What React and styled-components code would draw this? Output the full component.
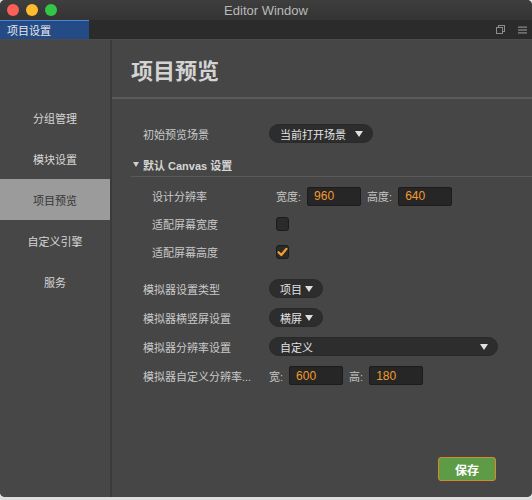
import React from "react";
import styled, { createGlobalStyle } from "styled-components";

const GlobalStyle = createGlobalStyle`
  html, body { margin: 0; padding: 0; background: #dedede; }
  body { font-family: "Liberation Sans", "Noto Sans CJK SC", sans-serif; }
  * { box-sizing: border-box; }
`;

const Window = styled.div`
  width: 532px;
  height: 497px;
  display: flex;
  flex-direction: column;
  background: #464646;
  border-radius: 5px 5px 5px 5px;
  overflow: hidden;
`;

const TitleBar = styled.div`
  height: 20px;
  display: grid;
  grid-template-columns: 1fr auto 1fr;
  align-items: center;
  background: linear-gradient(#3e3e3e, #343434);
`;

const Lights = styled.div`
  display: flex;
  gap: 7px;
  padding-left: 7px;
`;

const Light = styled.span`
  width: 12px;
  height: 12px;
  border-radius: 50%;
  background: ${(p) => p.$c};
`;

const Title = styled.div`
  font-size: 13px;
  color: #b9b9b9;
`;

const TabBar = styled.div`
  height: 20px;
  display: flex;
  justify-content: space-between;
  background: #2b2b2b;
  border-bottom: 1px solid #4b4b4b;
`;

const Tab = styled.div`
  width: 89px;
  background: #254b87;
  border-top: 1px solid #4a86d6;
  color: #e6e6e6;
  font-size: 11px;
  padding-left: 7px;
  display: flex;
  align-items: center;
`;

const TabIcons = styled.div`
  display: flex;
  align-items: center;
  gap: 13px;
  padding-right: 5px;
`;

const Body = styled.div`
  flex: 1;
  display: flex;
  min-height: 0;
`;

const Sidebar = styled.div`
  width: 112px;
  padding-top: 57px;
  background: #474747;
  border-right: 2px solid #3a3a3a;
  display: flex;
  flex-direction: column;
`;

const NavItem = styled.div`
  height: 41px;
  display: flex;
  align-items: center;
  justify-content: center;
  font-size: 11px;
  color: ${(p) => (p.$active ? "#353535" : "#d6d6d6")};
  background: ${(p) => (p.$active ? "#9b9b9b" : "transparent")};
`;

const Main = styled.div`
  flex: 1;
  display: flex;
  flex-direction: column;
  background: #464646;
`;

const Header = styled.div`
  height: 59px;
  padding: 7px 0 0 19px;
  display: flex;
  align-items: center;
  border-bottom: 2px solid #5b5b5b;
`;

const H1 = styled.h1`
  margin: 0;
  font-size: 22px;
  font-weight: bold;
  color: #d3d3d3;
  line-height: 22px;
`;

const Form = styled.div`
  display: flex;
  flex-direction: column;
  padding: 20px 0 0 19px;
`;

const Row = styled.div`
  height: ${(p) => p.$h || 29}px;
  margin-top: ${(p) => p.$mt || 0}px;
  padding-left: ${(p) => p.$indent}px;
  display: flex;
  align-items: center;
`;

const Label = styled.div`
  width: ${(p) => p.$w}px;
  flex: none;
  font-size: 11px;
  color: #c9c9c9;
  white-space: nowrap;
`;

const SectionHeader = styled.div`
  height: 24px;
  margin-top: 5px;
  padding-left: 2px;
  display: flex;
  align-items: center;
  gap: 4px;
  border-bottom: 1px solid #5a5a5a;
  font-size: 11px;
  font-weight: bold;
  color: #d6d6d6;
`;

const Pill = styled.div`
  width: ${(p) => p.$w}px;
  height: 19px;
  border-radius: 10px;
  background: #2d2d2d;
  border: 1px solid #292929;
  padding: 0 9px 0 10px;
  display: flex;
  align-items: center;
  justify-content: space-between;
  font-size: 11px;
  color: #e2e2e2;
`;

const FieldLabel = styled.span`
  font-size: 11px;
  color: #c4c4c4;
  margin-left: ${(p) => p.$ml || 0}px;
  margin-right: 6px;
  white-space: nowrap;
`;

const Input = styled.div`
  width: 54px;
  height: 19px;
  background: #262626;
  border: 1px solid #1c1c1c;
  border-radius: 2px;
  padding-left: 6px;
  display: flex;
  align-items: center;
  font-size: 12px;
  color: #f29b2c;
`;

const Check = styled.div`
  width: 13px;
  height: 14px;
  background: #2a2a2a;
  border: 1px solid #1b1b1b;
  border-radius: 3px;
  display: flex;
  align-items: center;
  justify-content: center;
`;

const Footer = styled.div`
  margin-top: auto;
  display: flex;
  justify-content: flex-end;
  padding: 0 36px 16px 0;
`;

const SaveButton = styled.button`
  width: 58px;
  height: 24px;
  background: #5e9b47;
  border: 1px solid #d88a2a;
  border-radius: 3px;
  color: #ffffff;
  font-family: inherit;
  font-size: 12px;
  font-weight: bold;
  padding: 0;
`;

const Arrow = ({ w = 8, h = 6, c = "#e0e0e0" }) => (
  <svg width={w} height={h} viewBox={`0 0 ${w} ${h}`}>
    <polygon points={`0,0 ${w},0 ${w / 2},${h}`} fill={c} />
  </svg>
);

const Tick = () => (
  <svg width="11" height="10" viewBox="0 0 11 10">
    <path d="M1.5 5.2 L4.3 8 L9.5 1.8" fill="none" stroke="#f3a02c" strokeWidth="2.2" strokeLinecap="round" strokeLinejoin="round" />
  </svg>
);

const RestoreIcon = () => (
  <svg width="9" height="9" viewBox="0 0 9 9">
    <rect x="2.5" y="0.5" width="6" height="6" fill="none" stroke="#8c8c8c" />
    <rect x="0.5" y="2.5" width="6" height="6" fill="#2b2b2b" stroke="#8c8c8c" />
  </svg>
);

const MenuIcon = () => (
  <svg width="9" height="8" viewBox="0 0 9 8">
    <rect x="0" y="0.5" width="9" height="1.2" fill="#8c8c8c" />
    <rect x="0" y="3.4" width="9" height="1.2" fill="#8c8c8c" />
    <rect x="0" y="6.3" width="9" height="1.2" fill="#8c8c8c" />
  </svg>
);

const navItems = ["分组管理", "模块设置", "项目预览", "自定义引擎", "服务"];

export default function App() {
  return (
    <>
      <GlobalStyle />
      <Window>
        <TitleBar>
          <Lights>
            <Light $c="#fc5f57" />
            <Light $c="#fdbc2e" />
            <Light $c="#33c748" />
          </Lights>
          <Title>Editor Window</Title>
          <div />
        </TitleBar>
        <TabBar>
          <Tab>项目设置</Tab>
          <TabIcons>
            <RestoreIcon />
            <MenuIcon />
          </TabIcons>
        </TabBar>
        <Body>
          <Sidebar>
            {navItems.map((n) => (
              <NavItem key={n} $active={n === "项目预览"}>
                {n}
              </NavItem>
            ))}
          </Sidebar>
          <Main>
            <Header>
              <H1>项目预览</H1>
            </Header>
            <Form>
              <Row $indent={12}>
                <Label $w={126}>初始预览场景</Label>
                <Pill $w={104}>
                  当前打开场景
                  <Arrow />
                </Pill>
              </Row>
              <SectionHeader>
                <Arrow w={6} h={5} c="#cfcfcf" />
                默认 Canvas 设置
              </SectionHeader>
              <Row $indent={21} $h={28} $mt={5}>
                <Label $w={124}>设计分辨率</Label>
                <FieldLabel>宽度:</FieldLabel>
                <Input>960</Input>
                <FieldLabel $ml={6}>高度:</FieldLabel>
                <Input>640</Input>
              </Row>
              <Row $indent={21} $h={28}>
                <Label $w={124}>适配屏幕宽度</Label>
                <Check />
              </Row>
              <Row $indent={21} $h={28}>
                <Label $w={124}>适配屏幕高度</Label>
                <Check>
                  <Tick />
                </Check>
              </Row>
              <Row $indent={12} $mt={8}>
                <Label $w={126}>模拟器设置类型</Label>
                <Pill $w={54}>
                  项目
                  <Arrow />
                </Pill>
              </Row>
              <Row $indent={12}>
                <Label $w={126}>模拟器横竖屏设置</Label>
                <Pill $w={54}>
                  横屏
                  <Arrow />
                </Pill>
              </Row>
              <Row $indent={12}>
                <Label $w={126}>模拟器分辨率设置</Label>
                <Pill $w={229}>
                  自定义
                  <Arrow />
                </Pill>
              </Row>
              <Row $indent={12}>
                <Label $w={126}>模拟器自定义分辨率...</Label>
                <FieldLabel>宽:</FieldLabel>
                <Input>600</Input>
                <FieldLabel $ml={6}>高:</FieldLabel>
                <Input>180</Input>
              </Row>
            </Form>
            <Footer>
              <SaveButton>保存</SaveButton>
            </Footer>
          </Main>
        </Body>
      </Window>
    </>
  );
}
